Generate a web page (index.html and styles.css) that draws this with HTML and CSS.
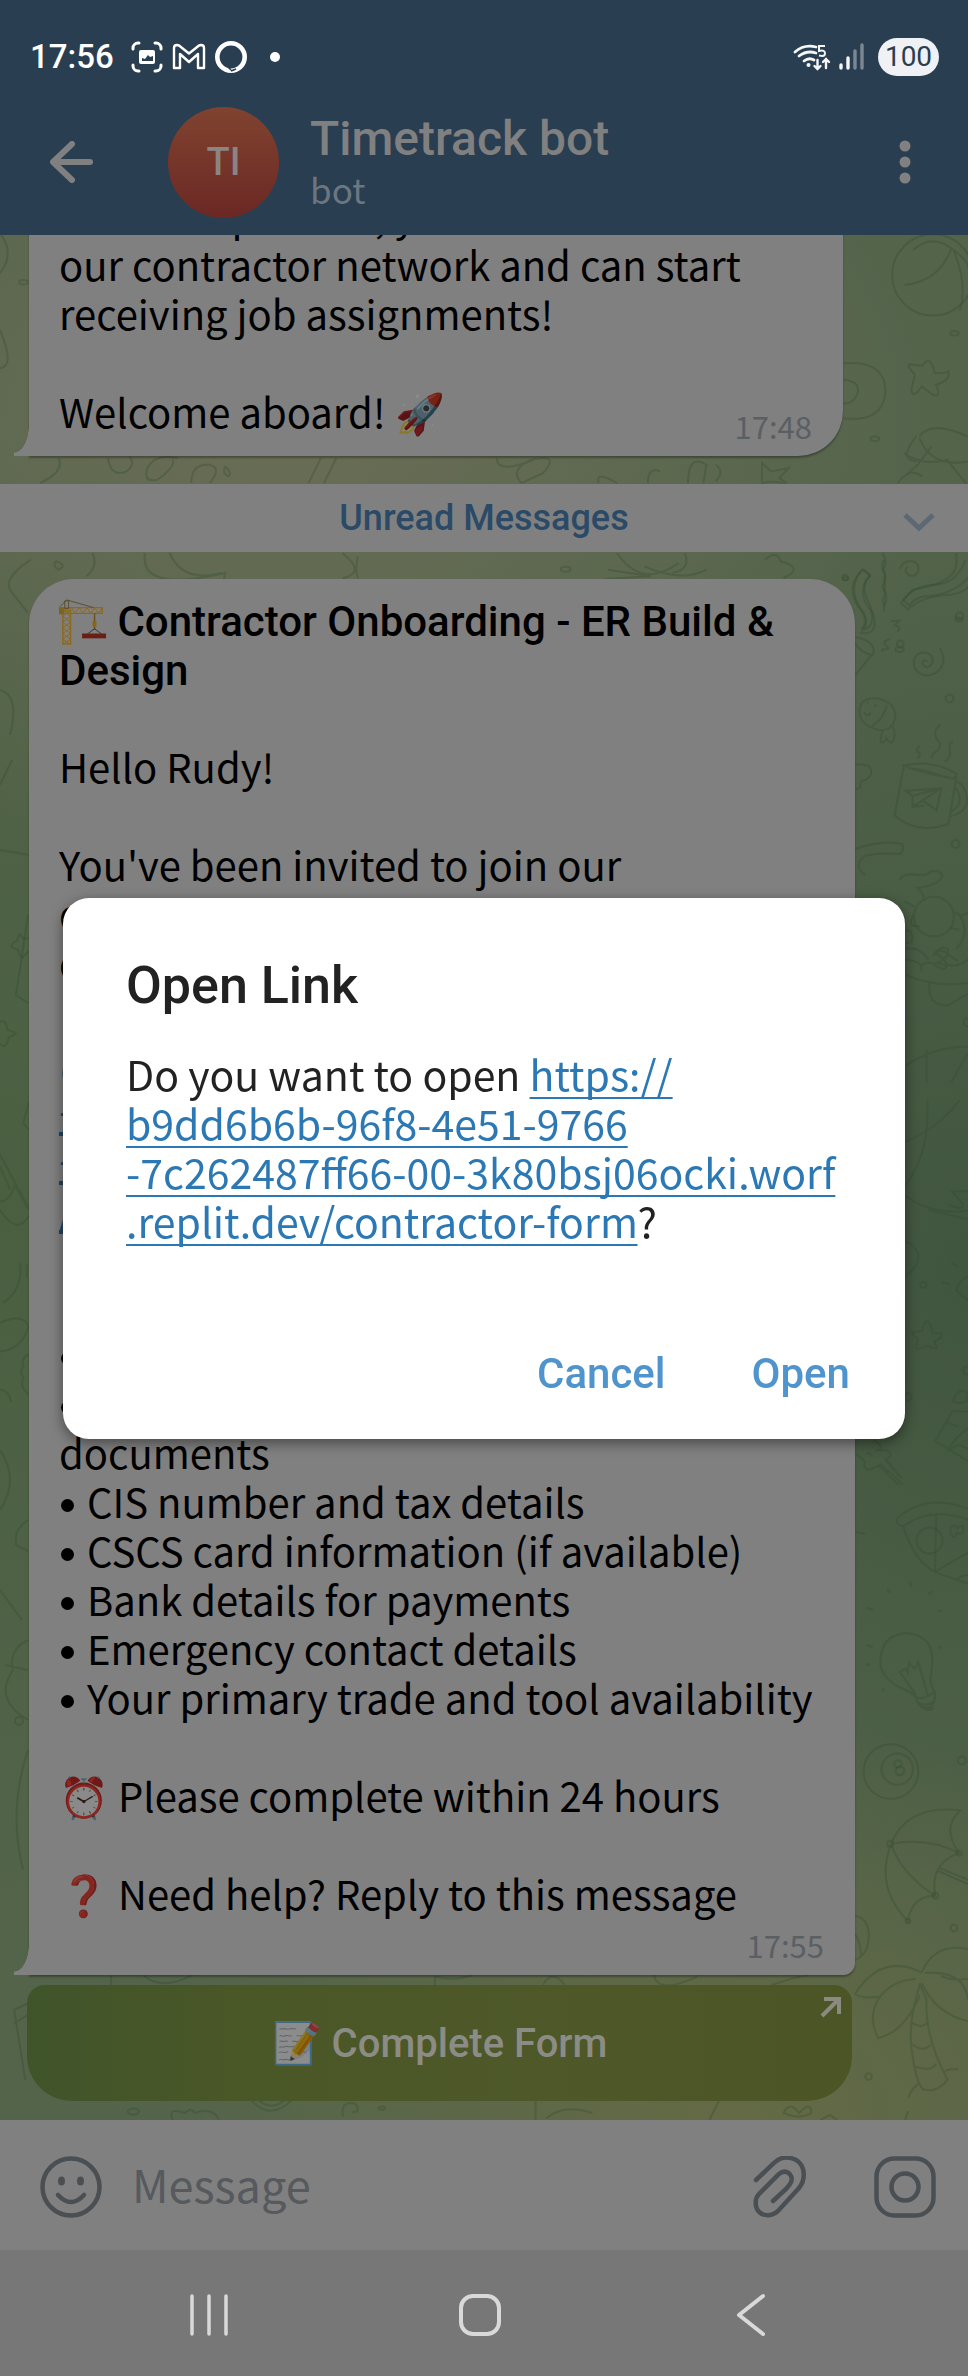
FILE: index.html
```html
<!DOCTYPE html>
<html lang="en">
<head>
<meta charset="utf-8">
<meta name="viewport" content="width=device-width, initial-scale=1">
<title>Timetrack bot</title>
<link rel="stylesheet" href="styles.css">
</head>
<body>
<div class="app">
  <header class="top">
    <div class="status">
      <time class="clock">17:56</time>
      <svg class="status-icons" width="152" height="34" viewBox="130 40 152 34" fill="none" stroke="#fff" aria-hidden="true">
        <g stroke-width="3" stroke-linecap="round">
          <path d="M133 49v-1a5 5 0 0 1 5-5h1M155 43h1a5 5 0 0 1 5 5v1M161 65v1a5 5 0 0 1-5 5h-1M139 71h-1a5 5 0 0 1-5-5v-1"/>
        </g>
        <path fill="#fff" stroke="none" fill-rule="evenodd" d="M141 50h12a2 2 0 0 1 2 2v10a2 2 0 0 1-2 2h-12a2 2 0 0 1-2-2v-10a2 2 0 0 1 2-2zM142 61v-3l3 1 3-4 2 2 3-1v5z"/>
        <path stroke-width="2.4" stroke-linejoin="round" d="M174 66V48q0-3 3-3l2 .5 10 8 10-8 2-.5q3 0 3 3v20h-6V54l-9 8-9-8v14h-6z"/>
        <circle cx="231" cy="57" r="13.7" stroke-width="4.6"/>
        <path stroke="#2a3e51" stroke-width="1.6" d="M228 67l3 3M231 71l5-2"/>
        <circle cx="275" cy="57" r="5" fill="#fff" stroke="none"/>
      </svg>
      <svg class="signal" width="72" height="32" viewBox="792 41 72 32" fill="none" stroke="#f4f6f8" aria-hidden="true">
        <g stroke-width="2.8" stroke-linecap="round">
          <path d="M795 52q9-8 21-5M799 56q8-6 17-3M804 61q5-4 10-1"/>
          <path d="M817.500 60v9m-3-3l3 3 3-3M826 68v-9m-3 3l3-3 3 3" stroke-width="2.400"/>
        </g>
        <circle cx="808.500" cy="65" r="2" fill="#f4f6f8" stroke="none"/>
        <path d="M825 46h-6v5q6-1.500 6 2.500 0 3.500-6 2" stroke-width="2"/>
        <g stroke-width="3.400" stroke-linecap="round">
          <path d="M841 65v3M848 58v10"/>
          <path d="M855 51v17M862 45v23" stroke="#7b8894"/>
        </g>
      </svg>
      <span class="battery">100</span>
    </div>
    <div class="chat-head">
      <button class="icon-btn back" aria-label="Back">
        <svg width="44" height="42" viewBox="0 0 44 42" fill="none" stroke="#808080" stroke-width="6" stroke-linecap="round" stroke-linejoin="round"><path d="M40 21H4M22 3L3 21l19 18"/></svg>
      </button>
      <div class="avatar">TI</div>
      <div class="who">
        <h1 class="name">Timetrack bot</h1>
        <p class="kind">bot</p>
      </div>
      <button class="icon-btn" aria-label="Menu">
        <svg width="12" height="44" viewBox="0 0 12 44" fill="#808080"><circle cx="6" cy="6" r="5.500"/><circle cx="6" cy="22" r="5.500"/><circle cx="6" cy="38" r="5.500"/></svg>
      </button>
    </div>
  </header>

  <main class="chat">
    <svg class="doodles" viewBox="0 0 968 1885" preserveAspectRatio="xMinYMin slice" aria-hidden="true">
      <!-- upper area -->
      <g transform="translate(0 -15) scale(.617 .333)">
        <ellipse cx="1512" cy="165" rx="66" ry="122"/><path d="M1480 90q30-50 62-5t26 60M1542 85q-20 100-76 110M1546 92q22 100 10 180"/>
        <circle cx="1547" cy="340" r="7"/><circle cx="1418" cy="657" r="7"/><circle cx="38" cy="187" r="7"/><circle cx="917" cy="1049" r="8"/><circle cx="1458" cy="1290" r="7"/><circle cx="1554" cy="1200" r="6"/><circle cx="1370" cy="1077" r="5"/>
        <path d="M1500 425q10-10 15 35 20 0 22-5 5 25-20 40 10 40-5 30l-18-25q-15 40-17 10l6-45q-15-30-8-32l20 5z"/>
        <path d="M1367 430q70-10 68 90-5 90-68 75M1367 480q30 5 22 45-8 30-22 25M0 40q25 60 0 120M0 330q25 110 0 115"/>
        <path d="M1490 650q20-50 78 0M1490 655q20 90 78 70M1485 650q-30 70 0 75M1465 700q30 40 70 20l30 70M1465 770l20-30 25-60M1455 790q20-50 40-20"/>
        <path d="M95 715q10 40-30 75M175 715q5 60 30 40 15-20 5-45M238 750q10-50 50-35M240 740q-10 50 15 40 30-40 25-60M310 790q0-60 30-55 20 10 0 55M365 740q12 20 5 30-10-10-5-30M500 790l20-75M525 790l20-75M805 715q0 50 60 5M845 790q-20-40 15-70 50-20 20 40l-35 30M970 790q-5-40 30 0M1050 790q0-50 20-35M1115 790q0-90 30-55l-5 55M1160 735q15 20 0 50M1235 730l15 25 28-10-15 30 12 15-25-5-15 5v-30z"/>
        <path d="M50 1020q-50 60-30 100l25 60M90 1025q20 10 5 25-10-10-5-25M235 1000q-10 120 130 60l-5 45M275 1000q20 90 85 60M555 1000q40 60 0 76M1000 1000q40 110 100 30M1110 1000q10 50-20 60M985 1050l70 20-75 8M1045 1040q60 50 100 10M1240 1020q20-30 25 5 40 20 5 50M150 1000q10 40-10 70M580 1010q-5 40 0 66"/>
        <path d="M1400 1050q-30 40-10 110 25 40 5 80 30 10 20-60-30-60-5-110zM1430 1000q10 30 0 50 10 30 0 50 12 30 2 60M1550 1000v30q0 60-70 80l-20 40 12 20q20-40 70-45 30-10 30-40"/>
      </g>
      <!-- right side, upper -->
      <g transform="translate(840 325) scale(.333)">
        <path d="M180 28q5-25 35-25 25 5 20 30-10 20-30 12-15-12-3-25M190 119l18 18q20-30 60-28 80-10 120-60M190 119q30-40 90-45 70 0 97-74"/>
        <circle cx="16" cy="52" r="8"/><circle cx="359" cy="168" r="11"/><circle cx="181" cy="252" r="10"/><circle cx="329" cy="416" r="12"/><circle cx="347" cy="853" r="12"/><circle cx="383" cy="1388" r="12"/>
        <path d="M67 28l24 18q-30 20-10 70 25 50 10 80-10 15-25 8 20-15-5-60-40-60 6-116zM132 0q-10 15 0 30 8 15-1 30 8 15 0 30 8 15-3 30 8 15 3 35M152 184l26-2-14 14q22 5 8 20M150 238q-25 5-12 20 18 12-10 10l-2 8M46 231q55 10 56 45l-56 70M46 250q15 30 54 35"/>
        <path d="M300 266q25 40-8 70-40 25-66-8-15-40 20-50 35 0 32 30-15 25-30 5-3-15 14-10"/>
        <path d="M58 455q2-42 50-40 60 10 58 55-5 45-50 40-55-12-58-55zM95 500q35-20 45-62M127 512l-6 35q12 5 18-12 10 18 20 10 10-20 0-45M80 430l6-3M103 440l7-5M72 458q12 18 20 0"/>
        <path d="M46 614q50-5 48 25-5 20-25 23-10 5-8 20l-15 8M46 868q80-30 140-15 10 15-5 30-60-5-105 5-40 30 0 58M180 960q10-20 50-15 25 5 45-10 30-5 32 15-10 25-75 35 15 10 20 30"/>
        <path d="M192 617l-28 150q70 60 162 25l24-145M192 617q85-20 158 25-5 20-20 12-90-15-138-37zM205 625q40 0 120 30M197 693l107-7-14 66-42-30-30 20v-34zM218 708l85-22-55 36M218 742l35-5M346 662q40 20 35 70-10 30-52 38M343 680q20 20 15 50-5 15-27 25"/>
        <path d="M274 595l5-12q35-25 15-40-20-30 10-50M315 606q20-15 15-35-5-20 10-25M232 595q15-10 3-18-10-10 5-18"/>
        <circle cx="282" cy="1071" r="60"/><path d="M195 1026l28 15M220 1065q-20 40 20 35M345 1060l20 8 20-8M350 1058q50 50 0 110M330 1105l28 5M195 1112q30 0 20 35l-20 5M195 1170q40-15 70 30M195 1200q50 5 50 25M245 1235q-10-30 30-25 40 30 45 10 5-15-35-40 20-25 40-10 0 30-35 40 60 20 95-10M195 1245q90 40 189 25M268 1270q-5 70 55 68l61-35M280 1190q20-30 45-5l30 20M195 1520q90-60 189-58M260 1470v98M384 1480l-50 88"/>
      </g>
      <!-- right side, middle -->
      <g transform="translate(840 865) scale(.333)">
        <path d="M262 0q10 160-67 258M360 0q-70 90-165 125M195 287q80 60 189 45M326 315q80 30 10-40l48-2M265 330l119 28M195 422q60 30 30 80l-30 30M335 488l19 14M305 548l24 5M384 530q-30 15-34 42l34 30"/>
        <circle cx="250" cy="555" r="9"/><circle cx="204" cy="892" r="11"/><circle cx="382" cy="812" r="12"/>
        <path d="M260 665q10-5 18 35 30-2 27 5 0 12-22 20 12 25 2 21l-26-8q-25 15-31 5l6-25q-20-15-17-21l28-3q8-25 15-29z"/>
        <path d="M339 905q15-45 45-25l-5 25q-20 10-40 0zM384 935l-46-1-52 90 98 60M320 968l35 13M384 985q-50 40-60 70M330 1050q30-25 54 0"/>
        <path d="M46 955q40 30 60 70 20 10 15 25 35 0 30 20l-15 10 42 50M46 1060l28 25q-5 25 15 25l35-15 65 60M115 1095l60 60M135 1075l50 60M80 1065q10-10 17 5M106 1055q8-10 14 0M90 960q20 20 30 55"/>
        <path d="M46 1298l30 4M170 1258q90-80 214-30M190 1280q80-60 194-20M170 1258q0 20 20 22 30 100 95 138l99 34M289 1245l-4 172 99-58M350 1445q10-20 34-18"/><circle cx="269" cy="1323" r="39"/><path d="M333 1285q12-15 20 0 20-15 18 10-10 15-20 5-10 20-15 8-8-8-3-23z"/>
        <path d="M210 1445l5 18M142 1470l10 10M78 1525l22 6M278 1474l-12 10M305 1531l-10 5"/>
      </g>
      <!-- right side, lower -->
      <g transform="translate(840 1405) scale(.333)">
        <path d="M228 172q-10-15-50-30-60-35-57-80 5-80 80-82 70 5 76 70 0 40-5 60-2 25 12 45M228 172q25 10 56-17 5 15-2 30-20 15-48 5zM234 190l10 10q25 12 38-12M250 203q20 15 30 0M228 165l-48-69 18-9 5 11 5-30 16 18 11-20 28 100"/>
        <path d="M78 15l20 5M76 72l14 2M132 145l-4 8M305 19l-10 6"/>
        <circle cx="153" cy="395" r="82"/><circle cx="172" cy="388" r="47"/><circle cx="174" cy="372" r="11"/><circle cx="180" cy="393" r="13"/><circle cx="366" cy="362" r="12"/><circle cx="342" cy="865" r="10"/><circle cx="86" cy="1311" r="10"/>
        <path d="M153 612q50-120 209-100-60 50-4 128-90 30-72 128-70 0-82 76-100-100-51-232zM153 612q110-20 205 28M153 612q30 90 133 156M300 685l84 35M293 693l91 40"/><circle cx="151" cy="612" r="9"/><circle cx="358" cy="640" r="8"/><circle cx="287" cy="768" r="8"/><circle cx="204" cy="844" r="7"/>
        <path d="M46 828q45 10 40 70-5 50-40 62M46 885q15 20 18 65"/>
        <path d="M245 998q40-90 139-70M245 998q-120-60-200 65 20 15 75 8 40-50 108-53M120 1071q-40 60-5 125 80-20 125-130M240 1035q-40 120-22 215 15 95 35 100 40 10 70-30-70-130-63-240zM245 1030q40 90 139 115M255 1000q120-10 129 80M384 1018q-60 5-80-10M216 1150q30 20 50-5M218 1215q30 25 55 0M228 1282q50 15 60-10M205 1375q10-30 35-45M315 1295q20-10 40-5M205 1415l-10 25"/>
      </g>
      <!-- left side -->
      <g transform="translate(0 645) scale(.333)">
        <path d="M86 175l-16 2-9-15q-8 10-10 20-20 10-16 20l20 8q5 20 14 22l17-18M0 425q20-5 22 25 20 5 25 12l-20 10q-10 40-27 20M86 668l-16 62 16 20M0 825l86 160M0 860l30 70M0 965q30 0 45-50l41 75M0 990q50 80 86 20M60 1148q10 80-50 122M80 1155v40M0 1330q70-30 86 10-20 70-86 76M86 1425q-25 10-15 35-15 15 0 35-12 20 5 40l10 10M0 1530q30 5 33 38"/>
      </g>
      <g transform="translate(0 325)">
        <path d="M0 130q20 5 10 45M0 290q30 5 28 5M12 200l-12 25M28 355l-12 80 12 8"/>
      </g>
      <g transform="translate(0 1165)">
        <path d="M0 50q20 30 0 60M28 120q-15 10-12 25l12 6M0 190l22 30M28 240q-20 10-15 30-20 30 15 50M5 265l23 5M28 350q-20 60-5 120"/><circle cx="19" cy="321" r="4"/>
      </g>
      <!-- below the last message -->
      <g transform="translate(0 1685) scale(.617 .333)">
        <path d="M45 250l-22 20 18 210M23 310l22-25M180 165v30M232 165q30 50 80 0M705 195v-25q30 15 60-5M880 195q15-50 35 0M1060 165q5 60 70 5M1250 195q30-20 60-30"/>
        <circle cx="216" cy="575" r="9"/><circle cx="619" cy="565" r="5"/><path d="M408 543q30 60 64 0M420 543q20 30 40 0M280 600q-10-40 20-20 10-20 15 0 30-20 40 20M556 590q-5-50 20-38 10 25-5 25M868 600v-56M885 595q30-45 75-15M1150 600l15-56M1270 580q10-40 25 0 20-40 20 0-20 20-45 0zM1330 600l15-15 12 15"/>
      </g>
    </svg>

    <article class="bubble first">
      <p>With this process, you will be added to our contractor network and can start receiving job assignments!</p>
      <div class="last-line"><p>Welcome aboard! <span class="emoji">🚀</span></p><time class="stamp">17:48</time></div>
    </article>

    <div class="unread">
      <span class="unread-label">Unread Messages</span>
      <svg class="chev" width="32" height="20" viewBox="0 0 32 20" fill="none" stroke="#5d6873" stroke-width="5"><path d="M2 3l14 13L30 3"/></svg>
    </div>

    <article class="bubble second">
      <h2 class="title"><svg class="crane" width="48" height="48" viewBox="0 0 50 48" fill="none" aria-hidden="true">
          <path d="M4 12h8v35H4z" stroke="#8a6a1f" stroke-width="1.500"/><path d="M4 12l8 6-8 6 8 6-8 6 8 6-8 5M12 12l-8 6 8 6-8 6 8 6-8 6 8 5" stroke="#8a6a1f"/>
          <path d="M0 9h45v6H0z" stroke="#8a6a1f" stroke-width="1.500"/><path d="M1 15l4-6 4 6 4-6 4 6 4-6 4 6 4-6 4 6 4-6 4 6 4-6" stroke="#8a6a1f"/>
          <path d="M8 1l-7 7M8 1l28 8M6 2h4v8H6z" stroke="#5b4c2a"/><path d="M0 9h5v7H0z" fill="#7d6226"/>
          <path d="M37 15v17" stroke="#6b4f18" stroke-width="1.500"/><path d="M35 23h4v6h-4z" fill="#8a6412"/><path d="M37 31l-8 6M37 31l8 6" stroke="#333"/><path d="M24 36h25v5H24z" fill="#6b1f14"/>
        </svg> Contractor Onboarding - ER Build &amp; Design</h2>
      <p>Hello Rudy!</p>
      <p>You've been invited to join our<br>contractor team across<br>our sites.</p>
      <p><span class="emoji">🔗</span> Your onboarding link:<br><a class="msg-link" href="#">-7c262487ff66-00-3k80bsj<br>-06ocki.worf.replit.dev<br>/contractor-form</a></p>
      <div>
        <p><span class="emoji">📋</span> What you will need:</p>
        <ul class="needs">
          <li>Personal details</li>
          <li>Insurance and ID</li>
        </ul>
        <span class="wrapped">documents</span>
        <ul class="needs">
          <li>CIS number and tax details</li>
          <li>CSCS card information (if available)</li>
          <li>Bank details for payments</li>
          <li>Emergency contact details</li>
          <li>Your primary trade and tool availability</li>
        </ul>
      </div>
      <p><span class="emoji">⏰</span> Please complete within 24 hours</p>
      <p><span class="emoji">❓</span> Need help? Reply to this message</p>
      <time class="stamp">17:55</time>
    </article>

    <button class="form-btn"><span class="emoji">📝</span> Complete Form
      <svg class="out" width="22" height="22" viewBox="0 0 22 22" fill="none" stroke="#8a8a80" stroke-width="4"><path d="M4 3h15v15M18 4L2 20"/></svg>
    </button>
  </main>

  <form class="composer">
    <button type="button" class="icon-btn" aria-label="Emoji">
      <svg width="62" height="62" viewBox="0 0 62 62" fill="none" stroke="#4a4f53" stroke-width="4.500" stroke-linecap="round"><circle cx="31" cy="31" r="28.500"/><path d="M18 39q13 14 26 0"/><g fill="#4a4f53" stroke="none"><ellipse cx="21.500" cy="25" rx="3.500" ry="4.500"/><ellipse cx="40.500" cy="25" rx="3.500" ry="4.500"/></g></svg>
    </button>
    <input class="field" type="text" placeholder="Message" aria-label="Message">
    <button type="button" class="icon-btn clip" aria-label="Attach">
      <svg width="56" height="62" viewBox="0 0 56 62" fill="none" stroke="#4a4f53" stroke-width="4.500" stroke-linecap="round"><path d="M4 24L22 7C32-3 48 2 51 13c2 8 0 14-4 19L26 55C18 62 6 60 4 50c-1-6 0-9 3-12L27 18c7-6 15 1 12 8-1 3-3 4-5 7L21 45"/></svg>
    </button>
    <button type="button" class="icon-btn" aria-label="Record video">
      <svg width="62" height="62" viewBox="0 0 62 62" fill="none" stroke="#4a4f53" stroke-width="4.500"><rect x="2.500" y="2.500" width="57" height="57" rx="18"/><circle cx="31" cy="31" r="13.500"/></svg>
    </button>
  </form>

  <nav class="nav">
    <button class="icon-btn" aria-label="Recent apps"><svg width="42" height="44" viewBox="0 0 42 44" stroke="#d9d9d9" stroke-width="3.500" stroke-linecap="round"><path d="M4 3v38M21 3v38M38 3v38"/></svg></button>
    <button class="icon-btn" aria-label="Home"><svg width="44" height="44" viewBox="0 0 44 44" fill="none" stroke="#d9d9d9" stroke-width="4"><rect x="3" y="3" width="38" height="38" rx="12"/></svg></button>
    <button class="icon-btn" aria-label="Back"><svg width="32" height="44" viewBox="0 0 32 44" fill="none" stroke="#d9d9d9" stroke-width="4" stroke-linecap="round" stroke-linejoin="round"><path d="M28 3L4 22l24 19"/></svg></button>
  </nav>
</div>

<div class="overlay">
  <section class="dialog" role="dialog" aria-labelledby="dlg-title">
    <h2 class="dialog-title" id="dlg-title">Open Link</h2>
    <p class="dialog-text">Do you want to open <a class="url" href="#">https://<br>b9dd6b6b-96f8-4e51-9766<br>-7c262487ff66-00-3k80bsj06ocki.worf<br>.replit.dev/contractor-form</a>?</p>
    <div class="actions">
      <button class="action">Cancel</button>
      <button class="action">Open</button>
    </div>
  </section>
</div>
</body>
</html>
```
FILE: styles.css
```css
* { box-sizing: border-box; }
body {
  margin: 0;
  font-family: "Noto Sans CJK SC", "Noto Sans", sans-serif;
  font-size: 40px;
  line-height: 49px;
  color: #000;
}
h1, h2, p, ul { margin: 0; padding: 0; font-weight: 400; }
button {
  border: 0;
  padding: 0;
  background: none;
  font-family: Roboto, sans-serif;
  font-weight: 500;
}
svg { display: block; }

.app {
  display: flex;
  flex-direction: column;
  height: 100vh;
  background: #808080;
}

/* status bar and chat header */
.top { background: #2a3e51; color: #808080; }
.status {
  display: flex;
  align-items: center;
  height: 76px;
  padding: 38px 29px 0 30px;
}
.clock {
  font-family: Roboto, sans-serif;
  font-weight: 500;
  font-size: 33px;
  line-height: 38px;
  color: #fff;
}
.status-icons { margin-left: 16px; }
.signal { margin-left: auto; }
.battery {
  width: 61px;
  margin-left: 14px;
  border-radius: 19px;
  background: #eff1f5;
  color: #2a3e51;
  font-family: Roboto, sans-serif;
  font-size: 28px;
  line-height: 38px;
  text-align: center;
}
.chat-head {
  display: flex;
  align-items: center;
  padding: 31px 57px 17px 50px;
}
.avatar {
  width: 111px;
  margin-left: 74px;
  border-radius: 50%;
  background: linear-gradient(#80432f, #6b2824);
  color: #8c8482;
  font-family: Roboto, sans-serif;
  font-weight: 500;
  font-size: 38px;
  line-height: 111px;
  text-align: center;
}
.who { flex: 1; margin-left: 31px; padding-bottom: 4px; }
.name {
  font-family: Roboto, sans-serif;
  font-weight: 500;
  font-size: 48px;
  line-height: 56px;
}
.kind {
  font-size: 35px;
  line-height: 44px;
  color: #6b7780;
}
.chat-head .icon-btn { padding-bottom: 2px; }

/* conversation */
.chat {
  position: relative;
  flex: 1;
  display: flex;
  flex-direction: column;
  justify-content: flex-end;
  min-height: 0;
  padding-bottom: 19px;
  overflow: hidden;
  background:
    radial-gradient(ellipse 70% 24% at 30% 10%, #6a6d56, transparent),
    radial-gradient(ellipse 60% 22% at 75% 100%, #646a45, transparent),
    radial-gradient(ellipse 60% 42% at 100% 55%, #41563f, transparent),
    radial-gradient(ellipse 40% 40% at 0% 52%, #4a5f40, transparent),
    #53644b;
}
.doodles {
  position: absolute;
  inset: 0;
  width: 100%;
  height: 100%;
  fill: none;
  stroke: #2e4a30;
  stroke-opacity: .3;
  stroke-width: 2;
}
.doodles * { vector-effect: non-scaling-stroke; }
.bubble, .unread, .form-btn { flex: none; position: relative; }
.bubble {
  margin-left: 29px;
  padding: 18px 31px 13px 30px;
  background: #808080;
  box-shadow: 0 2px 2px rgba(0, 0, 0, .3);
}
.bubble::before {
  content: "";
  position: absolute;
  left: -15px;
  bottom: 0;
  width: 15px;
  height: 30px;
  background: radial-gradient(ellipse 15px 27px at 0 0, transparent 97%, #808080);
}
.first {
  margin-right: 125px;
  border-radius: 45px 45px 45px 0;
}
.last-line {
  display: flex;
  justify-content: space-between;
  min-height: 56px;
  margin-top: 49px;
}
.stamp {
  align-self: flex-end;
  font-size: 31px;
  line-height: 34px;
  color: #5a5f64;
}
.emoji { filter: brightness(.55); }
.unread {
  display: grid;
  grid-template-columns: 1fr auto 1fr;
  align-items: center;
  height: 68px;
  margin: 28px 0 27px;
  padding: 0 33px;
  background: #808080;
}
.unread-label {
  grid-column: 2;
  font-family: Roboto, sans-serif;
  font-weight: 500;
  font-size: 36px;
  line-height: 42px;
  color: #2a4a67;
}
.chev { justify-self: end; margin-top: 8px; }
.second {
  display: flex;
  flex-direction: column;
  gap: 49px;
  margin-right: 113px;
  border-radius: 45px 45px 12px 0;
}
.title {
  margin-bottom: -2px;
  font-family: Roboto, sans-serif;
  font-weight: 500;
  font-size: 42px;
}
.crane { display: inline-block; vertical-align: -10px; }
.msg-link { color: #1b4668; text-underline-offset: 6px; }
.needs { list-style: none; }
.needs li { display: flex; }
.needs li::before {
  content: "";
  width: 13px;
  height: 13px;
  margin: 22px 13px 0 2px;
  border-radius: 50%;
  background: #000;
}
.wrapped { display: block; }
.second .stamp { margin-top: -39px; }
.form-btn {
  height: 116px;
  margin: 10px 116px 0 27px;
  padding-top: 2px;
  border-radius: 18px 18px 45px 45px;
  background: linear-gradient(90deg, #40542a, #4a5727 25%, #4e5828 60%, #4b5526);
  color: #8c8c86;
  font-size: 40px;
  line-height: 48px;
}
.out { position: absolute; top: 11px; right: 10px; }

/* message composer */
.composer {
  display: flex;
  align-items: center;
  height: 130px;
  padding: 4px 32px 0 40px;
}
.field {
  flex: 1;
  min-width: 0;
  margin-left: 30px;
  padding: 0 0 6px;
  border: 0;
  outline: 0;
  background: none;
  font: inherit;
  font-size: 45px;
  line-height: 64px;
}
.field::placeholder { color: #56595d; opacity: 1; }
.clip { margin-right: 66px; }

/* system navigation */
.nav {
  display: grid;
  grid-template-columns: repeat(3, 1fr);
  justify-items: center;
  align-items: center;
  height: 126px;
  padding: 4px 82px 0 73px;
  background: #777;
}

/* link confirmation */
.overlay {
  position: fixed;
  inset: 0;
  display: flex;
  align-items: center;
  justify-content: center;
  padding: 0 63px 39px;
}
.dialog {
  flex: 1;
  padding: 58px 55px 41px 63px;
  border-radius: 26px;
  background: #fff;
  color: #222;
  box-shadow: 0 4px 14px rgba(0, 0, 0, .45);
}
.dialog-title {
  font-family: Roboto, sans-serif;
  font-weight: 500;
  font-size: 52px;
  line-height: 60px;
}
.dialog-text { margin-top: 33px; font-size: 41px; }
.url {
  color: #2b78b4;
  text-decoration-thickness: 2px;
  text-underline-offset: 6px;
  text-decoration-skip-ink: none;
}
.actions {
  display: flex;
  justify-content: flex-end;
  gap: 86px;
  margin-top: 105px;
}
.action {
  color: #4f94cc;
  font-size: 42px;
  line-height: 48px;
}
```
